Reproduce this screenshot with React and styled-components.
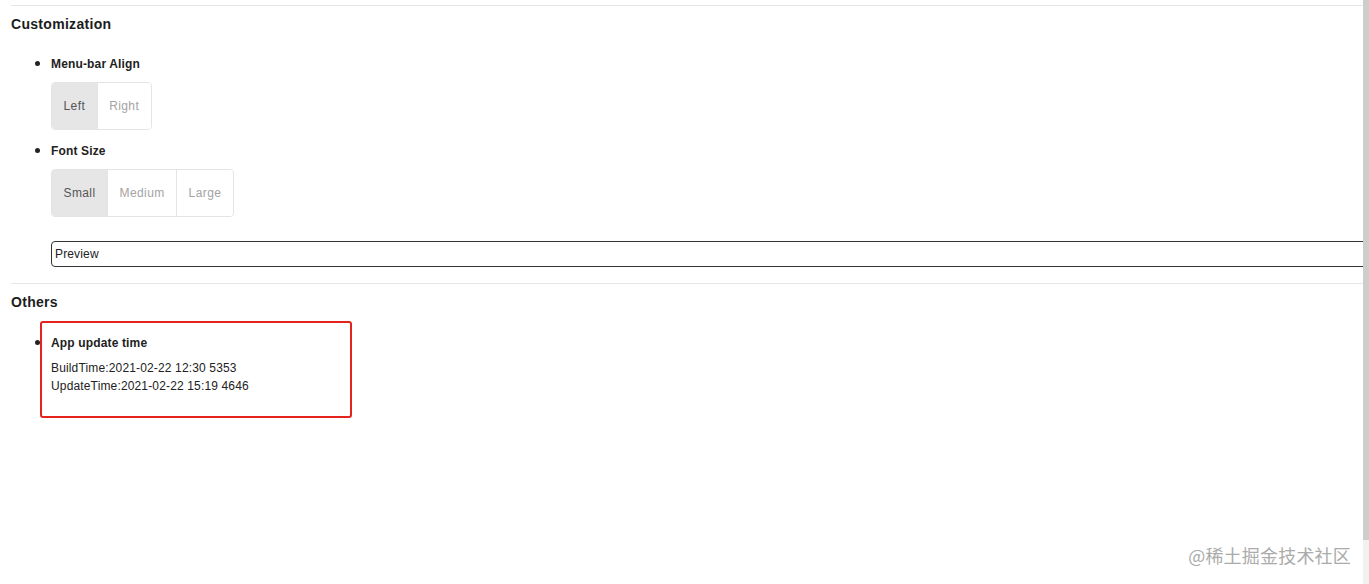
import React from 'react'
import styled, { createGlobalStyle } from 'styled-components'

const GlobalStyle = createGlobalStyle`
  html, body {
    margin: 0;
    padding: 0;
    background: #fff;
  }
  body {
    font-family: 'Liberation Sans', Arial, sans-serif;
    color: #222;
  }
`

const Page = styled.div`
  display: flex;
  height: 584px;
  overflow: hidden;
  position: relative;
`

const Main = styled.div`
  flex: 1;
  min-width: 0;
  padding-left: 11px;
  overflow: hidden;
`

const Scrollbar = styled.div`
  width: 6px;
  background: #f1f1f1;
  display: flex;
  flex-direction: column;
`

const Thumb = styled.div`
  height: 540px;
  background: #cdcdcd;
`

const Divider = styled.div`
  margin-top: ${(p) => p.$top}px;
  border-top: 1px solid #e6e6e6;
`

const SectionTitle = styled.h3`
  margin: 10px 0 0;
  font-size: 14px;
  line-height: 17px;
  font-weight: bold;
  letter-spacing: 0.3px;
  color: #1c1c1c;
`

const List = styled.ul`
  margin: ${(p) => p.$top}px 0 0;
  padding-left: 40px;
  list-style: disc;
`

const Item = styled.li`
  position: relative;
  margin-top: ${(p) => p.$top || 0}px;
  font-size: 12px;
  line-height: 14px;

  &::marker {
    font-size: 15px;
    color: #222;
  }
`

const Label = styled.div`
  font-size: 12px;
  line-height: 14px;
  font-weight: bold;
  letter-spacing: 0.15px;
  color: #222;
`

const Group = styled.div`
  display: flex;
  width: fit-content;
  margin-top: 11px;
  height: 48px;
  box-sizing: border-box;
  border: 1px solid #e4e4e4;
  border-radius: 4px;
  overflow: hidden;
`

const Option = styled.div`
  display: flex;
  align-items: center;
  padding: 0 11.5px;
  font-size: 12px;
  letter-spacing: 0.4px;
  background: ${(p) => (p.$active ? '#e6e6e6' : '#fff')};
  color: ${(p) => (p.$active ? '#555' : '#a3a3a3')};
  & + & {
    border-left: 1px solid #e4e4e4;
  }
`

const Preview = styled.div`
  margin-top: 24px;
  width: 1340px;
  height: 26px;
  box-sizing: border-box;
  border: 1px solid #333;
  border-radius: 4px;
  padding: 0 3px;
  display: flex;
  align-items: center;
  font-size: 12px;
  letter-spacing: 0.15px;
  color: #222;
`

const Times = styled.div`
  margin-top: 9px;
  font-size: 12px;
  line-height: 18px;
  letter-spacing: 0.15px;
  color: #222;
`

const Highlight = styled.div`
  position: absolute;
  left: -11px;
  top: -14px;
  width: 312px;
  height: 97px;
  box-sizing: border-box;
  border: 2px solid #e5231d;
  border-radius: 3px;
  pointer-events: none;
`

const Watermark = styled.div`
  position: absolute;
  right: 18px;
  top: 543px;
  font-family: 'Noto Sans CJK SC', 'Liberation Sans', sans-serif;
  font-size: 18px;
  line-height: 24px;
  color: #ababab;
  letter-spacing: 0.2px;
`

const ButtonGroup = ({ options, active }) => (
  <Group>
    {options.map((o) => (
      <Option key={o} $active={o === active}>
        {o}
      </Option>
    ))}
  </Group>
)

const App = () => {
  return (
    <>
      <GlobalStyle />
      <Page>
        <Main>
          <Divider $top={5} />
          <SectionTitle>Customization</SectionTitle>
          <List $top={23}>
            <Item>
              <Label>Menu-bar Align</Label>
              <ButtonGroup options={['Left', 'Right']} active="Left" />
            </Item>
            <Item $top={13}>
              <Label>Font Size</Label>
              <ButtonGroup options={['Small', 'Medium', 'Large']} active="Small" />
              <Preview>Preview</Preview>
            </Item>
          </List>
          <Divider $top={16} />
          <SectionTitle>Others</SectionTitle>
          <List $top={24}>
            <Item>
              <Label>App update time</Label>
              <Times>
                <div>BuildTime:2021-02-22 12:30 5353</div>
                <div>UpdateTime:2021-02-22 15:19 4646</div>
              </Times>
              <Highlight />
            </Item>
          </List>
        </Main>
        <Scrollbar>
          <Thumb />
        </Scrollbar>
        <Watermark>@稀土掘金技术社区</Watermark>
      </Page>
    </>
  )
}

export default App
